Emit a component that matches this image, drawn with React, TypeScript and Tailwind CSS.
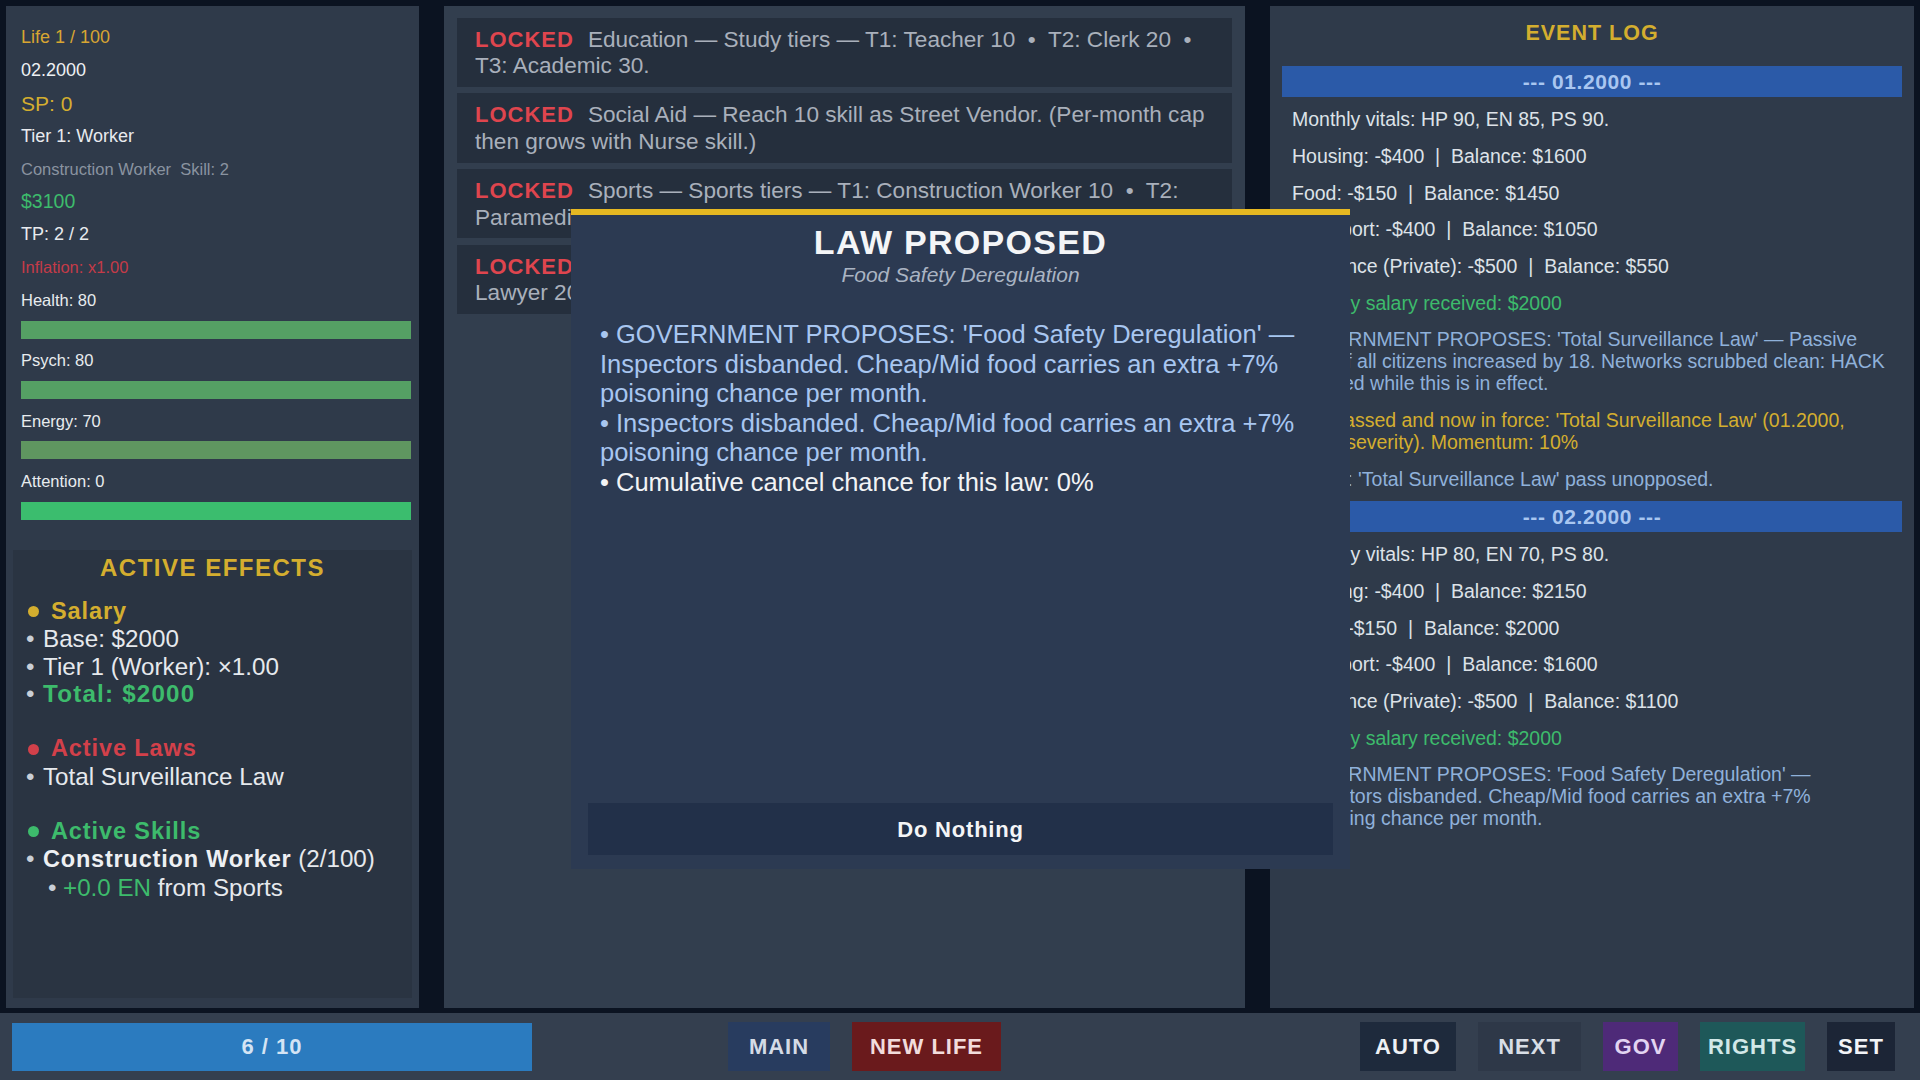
import React from "react";

function StatBar({ label, color }: { label: string; color: string }) {
  return (
    <div className="mb-[10.5px]">
      <div className="h-[22px] leading-[22px] text-[16.5px] text-[#e8ecef]">{label}</div>
      <div className={`mt-[9.7px] h-[18px] ${color}`} />
    </div>
  );
}

function Item({ children, sub }: { children: React.ReactNode; sub?: boolean }) {
  return (
    <div className={`flex whitespace-pre ${sub ? "pl-[22px]" : ""}`}>
      <span className={`${sub ? "w-[15px]" : "w-[17px]"} shrink-0 text-[#c9cfd7]`}>•</span>
      <span>{children}</span>
    </div>
  );
}

function LeftPanel() {
  return (
    <div className="w-[413px] shrink-0 bg-[#2f3a4a] px-[7px] pt-[15.6px] flex flex-col">
      <div className="pl-[8px] pr-[1px]">
        <div className="h-[32.8px] flex items-center text-[18px] text-[#d8a532]">Life 1 / 100</div>
        <div className="h-[32.8px] flex items-center text-[18px] text-[#eef0f3]">02.2000</div>
        <div className="h-[32.8px] flex items-center text-[21px] text-[#d4ae2f]">SP: 0</div>
        <div className="h-[32.8px] flex items-center text-[18px] text-[#e8eaee]">Tier 1: Worker</div>
        <div className="h-[32.8px] flex items-center text-[16.5px] text-[#8a93a0] whitespace-pre">{"Construction Worker  Skill: 2"}</div>
        <div className="h-[32.8px] flex items-center text-[19.5px] text-[#3dbb6c]">$3100</div>
        <div className="h-[32.8px] flex items-center text-[18px] text-[#e8eaee]">TP: 2 / 2</div>
        <div className="h-[32.8px] flex items-center text-[16.5px] text-[#c43a48]">Inflation: x1.00</div>
        <div className="mt-[5.3px]">
          <StatBar label="Health: 80" color="bg-[#55a064]" />
          <StatBar label="Psych: 80" color="bg-[#55a064]" />
          <StatBar label="Energy: 70" color="bg-[#5f9660]" />
          <StatBar label="Attention: 0" color="bg-[#3bbd6e]" />
        </div>
      </div>
      <div className="mt-[19.9px] mb-[10px] flex-1 bg-[#2a3442] pt-[4px]">
        <div className="text-center text-[24px] leading-[28px] font-bold tracking-[1.5px] text-[#d4ae2f]">ACTIVE EFFECTS</div>
        <div className="mt-[15.85px] pl-[13px] text-[24.2px] leading-[27.5px] text-[#e6e9ed]">
          <div className="flex items-center font-bold tracking-[0.9px] text-[23.5px] text-[#d4ae2f]">
            <span className="ml-[2px] mr-[12px] w-[11px] h-[11px] rounded-full bg-[#d4ae2f]" />
            Salary
          </div>
          <Item>Base: $2000</Item>
          <Item>Tier 1 (Worker): ×1.00</Item>
          <Item>
            <span className="font-bold tracking-[1.2px] text-[#3dbb6c]">Total: $2000</span>
          </Item>
          <div className="h-[27.5px]" />
          <div className="flex items-center font-bold tracking-[0.9px] text-[23.5px] text-[#d2404a]">
            <span className="ml-[2px] mr-[12px] w-[11px] h-[11px] rounded-full bg-[#d2404a]" />
            Active Laws
          </div>
          <Item>Total Surveillance Law</Item>
          <div className="h-[27.5px]" />
          <div className="flex items-center font-bold tracking-[0.9px] text-[23.5px] text-[#3dbb6c]">
            <span className="ml-[2px] mr-[12px] w-[11px] h-[11px] rounded-full bg-[#3dbb6c]" />
            Active Skills
          </div>
          <Item>
            <span className="font-bold tracking-[0.8px] text-[23.5px] text-[#eef0f3]">Construction Worker</span>
            {" (2/100)"}
          </Item>
          <Item sub>
            <span className="text-[#3dbb6c]">+0.0 EN</span>
            {" from Sports"}
          </Item>
        </div>
      </div>
    </div>
  );
}

function Card({ lines }: { lines: [string, string] }) {
  return (
    <div className="bg-[#252f3d] pl-[18px] pr-[18px] pt-[9px] pb-[7px] text-[22.6px] leading-[26.7px] text-[#a9b0bb] whitespace-pre">
      <span className="font-bold tracking-[1px] text-[22px] text-[#df454e] mr-[14px]">LOCKED</span>
      {lines[0]}
      <br />
      {lines[1]}
    </div>
  );
}

function MiddlePanel() {
  return (
    <div className="w-[801px] shrink-0 bg-[#323e4e] pt-[11.5px] px-[13px] flex flex-col gap-[6.3px]">
      <Card lines={["Education — Study tiers — T1: Teacher 10  •  T2: Clerk 20  •", "T3: Academic 30."]} />
      <Card lines={["Social Aid — Reach 10 skill as Street Vendor. (Per-month cap", "then grows with Nurse skill.)"]} />
      <Card lines={["Sports — Sports tiers — T1: Construction Worker 10  •  T2:", "Paramedic 20  •  T3: Doctor 30."]} />
      <Card lines={["Law — Law tiers — T1: Clerk 10  •  T2: Paralegal 15  •  T3:", "Lawyer 20."]} />
    </div>
  );
}

function DateBar({ children, extra }: { children: React.ReactNode; extra?: boolean }) {
  return (
    <div
      className={`${extra ? "mt-[3.8px]" : "mt-[1.3px]"} mb-[3.5px] h-[31.5px] bg-[#2b5aa8] flex items-center justify-center text-[21px] font-bold tracking-[0.6px] text-[#a9c6f0]`}
    >
      {children}
    </div>
  );
}

function Entry({ text, color }: { text: string; color: string }) {
  return (
    <div className={`whitespace-pre py-[7.35px] pl-[10px] text-[19.5px] leading-[22px] ${color}`}>{text}</div>
  );
}

function RightPanel() {
  const w = "text-[#dde2e8]";
  const g = "text-[#3dbb6c]";
  const b = "text-[#8fb1da]";
  const y = "text-[#d4ae2f]";
  return (
    <div className="w-[644px] shrink-0 bg-[#2f3a4a] px-[12px] pt-[13px] flex flex-col">
      <div className="text-center text-[21.5px] leading-[28px] font-bold tracking-[1px] text-[#d4ae2f]">EVENT LOG</div>
      <div className="mt-[17.5px]">
        <DateBar>--- 01.2000 ---</DateBar>
        <Entry color={w} text="Monthly vitals: HP 90, EN 85, PS 90." />
        <Entry color={w} text="Housing: -$400  |  Balance: $1600" />
        <Entry color={w} text="Food: -$150  |  Balance: $1450" />
        <Entry color={w} text="Transport: -$400  |  Balance: $1050" />
        <Entry color={w} text="Insurance (Private): -$500  |  Balance: $550" />
        <Entry color={g} text="Monthly salary received: $2000" />
        <Entry
          color={b}
          text={"GOVERNMENT PROPOSES: 'Total Surveillance Law' — Passive\nheat of all citizens increased by 18. Networks scrubbed clean: HACK\ndisabled while this is in effect."}
        />
        <Entry color={y} text={"Law passed and now in force: 'Total Surveillance Law' (01.2000,\nmajor severity). Momentum: 10%"} />
        <Entry color={b} text="Result: 'Total Surveillance Law' pass unopposed." />
        <DateBar extra>--- 02.2000 ---</DateBar>
        <Entry color={w} text="Monthly vitals: HP 80, EN 70, PS 80." />
        <Entry color={w} text="Housing: -$400  |  Balance: $2150" />
        <Entry color={w} text="Food: -$150  |  Balance: $2000" />
        <Entry color={w} text="Transport: -$400  |  Balance: $1600" />
        <Entry color={w} text="Insurance (Private): -$500  |  Balance: $1100" />
        <Entry color={g} text="Monthly salary received: $2000" />
        <Entry
          color={b}
          text={"GOVERNMENT PROPOSES: 'Food Safety Deregulation' —\nInspectors disbanded. Cheap/Mid food carries an extra +7%\npoisoning chance per month."}
        />
      </div>
    </div>
  );
}

function Btn({ children, cls }: { children: React.ReactNode; cls: string }) {
  return (
    <div className={`h-[49px] flex items-center justify-center text-[22px] font-bold tracking-[1px] ${cls}`}>{children}</div>
  );
}

function BottomBar() {
  return (
    <div className="h-[67px] bg-[#343f4f] flex items-center pl-[12px] pr-[25px]">
      <div className="w-[520px] h-[48px] bg-[#2b7bbf] flex items-center justify-center text-[22px] font-bold tracking-[1px] text-[#d4e4f4]">
        6 / 10
      </div>
      <div className="ml-[196px] flex gap-[22px]">
        <Btn cls="w-[102px] bg-[#283c5f] text-[#d4dbe6]">MAIN</Btn>
        <Btn cls="w-[149px] bg-[#6a1a1c] text-[#f2dcdc]">NEW LIFE</Btn>
      </div>
      <div className="ml-auto flex gap-[22px]">
        <Btn cls="w-[96px] bg-[#1e2a3c] text-[#eef1f5]">AUTO</Btn>
        <Btn cls="w-[103px] bg-[#2e3848] text-[#d8dee6]">NEXT</Btn>
        <Btn cls="w-[75px] bg-[#4e2a78] text-[#e2d4f2]">GOV</Btn>
        <Btn cls="w-[105px] bg-[#1e5859] text-[#d2e8e8]">RIGHTS</Btn>
        <Btn cls="w-[68px] bg-[#1c2536] text-[#f2f4f7]">SET</Btn>
      </div>
    </div>
  );
}

function Modal() {
  return (
    <div className="absolute left-[571px] top-[209px] w-[779px] h-[660px] border-t-[6px] border-[#e6b822] bg-[#2c3a52] flex flex-col px-[17px] pb-[14px]">
      <div className="mt-[10px] text-center text-[34px] leading-[34px] font-bold tracking-[1.3px] text-[#f4f5f7]">LAW PROPOSED</div>
      <div className="mt-[4px] text-center text-[21px] leading-[23px] italic text-[#aab4c3]">Food Safety Deregulation</div>
      <div className="mt-[34px] px-[12px] text-[25.5px] leading-[29.5px] whitespace-pre">
        <div className="text-[#a8c6f0]">
          {"• GOVERNMENT PROPOSES: 'Food Safety Deregulation' —"}
          <br />
          {"Inspectors disbanded. Cheap/Mid food carries an extra +7%"}
          <br />
          {"poisoning chance per month."}
        </div>
        <div className="text-[#a8c6f0]">
          {"• Inspectors disbanded. Cheap/Mid food carries an extra +7%"}
          <br />
          {"poisoning chance per month."}
        </div>
        <div className="text-[#f2f3f5]">{"• Cumulative cancel chance for this law: 0%"}</div>
      </div>
      <div className="flex-1" />
      <div className="h-[52px] bg-[#223049] flex items-center justify-center text-[22px] font-bold tracking-[0.8px] text-[#f4f5f7]">
        Do Nothing
      </div>
    </div>
  );
}

export default function App() {
  return (
    <div className="relative w-[1920px] h-[1080px] overflow-hidden bg-[#0b1321] font-['Liberation_Sans',Arial,sans-serif]">
      <div className="flex h-[1013px] pt-[6px] pb-[5px] px-[6px] gap-[25px]">
        <LeftPanel />
        <MiddlePanel />
        <RightPanel />
      </div>
      <BottomBar />
      <Modal />
    </div>
  );
}
